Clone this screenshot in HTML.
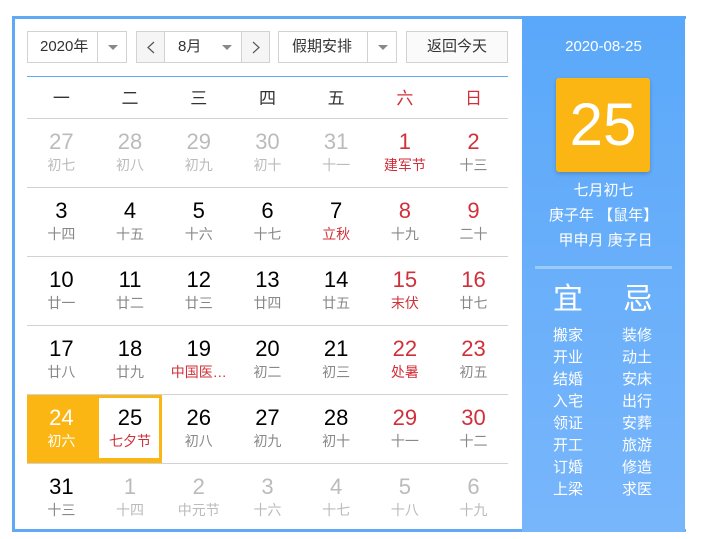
<!DOCTYPE html><html><head><meta charset="utf-8"><style>
*{margin:0;padding:0;box-sizing:border-box}
body{width:706px;height:539px;background:#fff;font-family:"Liberation Sans","Noto Sans CJK SC",sans-serif;position:relative;overflow:hidden}
.a{position:absolute}
.frame{left:12px;top:16px;width:674px;height:516px;border:3px solid #5fa9f5;border-right:none}
.box{border:1px solid #d2d2d2;height:32px;top:31px;font-size:15px;color:#333;line-height:30px}
.arr{width:0;height:0;border-left:5px solid transparent;border-right:5px solid transparent;border-top:5px solid #888}
.panel{left:522px;top:16px;width:163px;height:516px;background:linear-gradient(#5aa8fa,#78b6fb)}
.cell{position:absolute;width:68.7px;height:69px;text-align:center}
.n{font-size:22px;line-height:24px;padding-top:12px;color:#000}
.l{font-size:14px;line-height:18px;color:#888;padding-top:2px}
.hl{position:absolute;left:27px;height:1px;width:481px;background:#d2d2d2}
.w{position:absolute;top:84px;width:68.7px;text-align:center;font-size:17px;color:#333}
.red{color:#d0303a!important}
.yj{position:absolute;color:#fff;font-size:15px;line-height:22px}
</style></head><body>
<div class="a frame"></div>
<div class="a box" style="left:27px;width:100px"><span style="position:absolute;left:12px">2020年</span><div class="a" style="left:69px;top:0;height:30px;border-left:1px solid #d2d2d2;width:30px"><div class="arr a" style="left:10px;top:13px"></div></div></div>
<div class="a box" style="left:136px;width:134px"><div class="a" style="left:0;top:0;width:28px;height:30px;background:#f5f5f5;border-right:1px solid #d2d2d2"><svg class="a" style="left:9px;top:9px" width="10" height="13"><path d="M8 1L2 6.5L8 12" fill="none" stroke="#555" stroke-width="1.2"/></svg></div><span style="position:absolute;left:41px">8月</span><div class="arr a" style="left:85px;top:13px"></div><div class="a" style="right:0;top:0;width:28px;height:30px;background:#f5f5f5;border-left:1px solid #d2d2d2"><svg class="a" style="left:9px;top:9px" width="10" height="13"><path d="M2 1L8 6.5L2 12" fill="none" stroke="#555" stroke-width="1.2"/></svg></div></div>
<div class="a box" style="left:278px;width:119px"><span style="position:absolute;left:13px">假期安排</span><div class="a" style="left:88px;top:0;height:30px;border-left:1px solid #d2d2d2;width:30px"><div class="arr a" style="left:10px;top:13px"></div></div></div>
<div class="a box" style="left:406px;width:102px;text-align:center;background:#fafafa">返回今天</div>
<div class="a" style="left:27px;top:76px;width:481px;height:1px;background:#5fa9f5"></div>
<div class="w" style="left:27px">一</div><div class="w" style="left:95.7px">二</div><div class="w" style="left:164.4px">三</div><div class="w" style="left:233.1px">四</div><div class="w" style="left:301.8px">五</div><div class="w red" style="left:370.5px">六</div><div class="w red" style="left:439.2px">日</div>
<div class="hl" style="top:118px"></div><div class="hl" style="top:187px"></div><div class="hl" style="top:256px"></div><div class="hl" style="top:325px"></div><div class="hl" style="top:394px"></div><div class="hl" style="top:463px"></div>
<div class="a" style="left:27px;top:395px;width:135px;height:68px;background:#fbb614"></div>
<div class="a" style="left:99px;top:398px;width:60px;height:60px;background:#fff"></div>
<div id="g"></div>
<script>
var d=[
[["27","初七","g"],["28","初八","g"],["29","初九","g"],["30","初十","g"],["31","十一","g"],["1","建军节","r"],["2","十三","r"]],
[["3","十四"],["4","十五"],["5","十六"],["6","十七"],["7","立秋","f"],["8","十九","r"],["9","二十","r"]],
[["10","廿一"],["11","廿二"],["12","廿三"],["13","廿四"],["14","廿五"],["15","末伏","rf"],["16","廿七","r"]],
[["17","廿八"],["18","廿九"],["19","中国医…","f"],["20","初二"],["21","初三"],["22","处暑","rf"],["23","初五","r"]],
[["24","初六","s"],["25","七夕节","f"],["26","初八"],["27","初九"],["28","初十"],["29","十一","r"],["30","十二","r"]],
[["31","十三"],["1","十四","g"],["2","中元节","g"],["3","十六","g"],["4","十七","g"],["5","十八","g"],["6","十九","g"]]];
var h="";d.forEach(function(row,i){row.forEach(function(c,j){var t=c[2]||"";var nc=t.indexOf("r")>=0?"color:#d0303a":t=="g"?"color:#bbb":t=="s"?"color:#fff":"";var lc=(t=="f"||t=="rf"||(t=="r"&&c[1]=="建军节"))?"color:#d0303a":t=="g"?"color:#bbb":t=="s"?"color:#fff":"";
h+='<div class="cell" style="left:'+(27+j*68.7)+'px;top:'+(118+i*69)+'px"><div class="n" style="'+nc+'">'+c[0]+'</div><div class="l" style="'+lc+'">'+c[1]+'</div></div>';});});
document.getElementById("g").innerHTML=h;
</script>
<div class="a panel"></div>
<div class="a" style="left:522px;top:38px;width:163px;text-align:center;color:#fff;font-size:15px">2020-08-25</div>
<div class="a" style="left:556px;top:78px;width:94px;height:94px;background:#fbb614;border-radius:3px;box-shadow:0 2px 4px rgba(0,0,0,.2);color:#fff;font-size:60px;text-align:center;line-height:94px">25</div>
<div class="a" style="left:522px;top:178px;width:163px;text-align:center;color:#fff;font-size:15px;line-height:25px">七月初七<br>庚子年 【鼠年】<br>&nbsp;甲申月 庚子日</div>
<div class="a" style="left:535px;top:266px;width:137px;height:3px;background:#9ccafb"></div>
<div class="yj" style="left:553px;top:283px;font-size:30px;line-height:34px">宜</div>
<div class="yj" style="left:623px;top:283px;font-size:30px;line-height:34px">忌</div>
<div class="yj" style="left:553px;top:325px">搬家<br>开业<br>结婚<br>入宅<br>领证<br>开工<br>订婚<br>上梁</div>
<div class="yj" style="left:622px;top:325px">装修<br>动土<br>安床<br>出行<br>安葬<br>旅游<br>修造<br>求医</div>
</body></html>
